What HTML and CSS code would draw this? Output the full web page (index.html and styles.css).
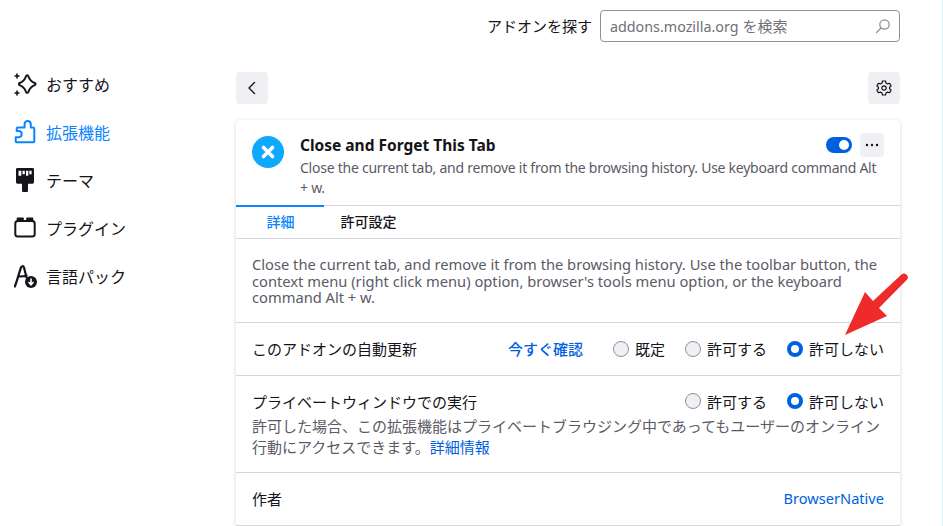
FILE: index.html

```html
<!DOCTYPE html>
<html lang="ja">
<head>
    <meta charset="UTF-8">
    <title>アドオンマネージャー</title>
    <link rel="stylesheet" href="styles.css">
</head>
<body>
    <nav class="sidebar">
        <a class="nav-item">
            <svg class="nav-icon" viewBox="0 0 24 24" fill="none" stroke="#15141a" stroke-width="2" stroke-linejoin="round"><path d="M12 4.200C11 7.500 9.500 9.500 5.600 11c-1 .4-1 1.700 0 2.100 3.900 1.500 5.400 3.500 6.400 6.800.4 1.200 2 1.200 2.400 0 1-3.300 2.500-5.300 6.400-6.800 1-.4 1-1.700 0-2.100-3.900-1.500-5.400-3.500-6.400-6.800-.4-1.200-2-1.200-2.400 0z"/><path d="M3 1.500v5M.5 4h5M3 18.500v5M.5 21h5" stroke-width="1.600"/></svg>
            <span>おすすめ</span>
        </a>
        <a class="nav-item active">
            <svg class="nav-icon" viewBox="0 0 24 24" fill="none" stroke="#0a84ff" stroke-width="2" stroke-linejoin="round"><path d="M1.700 20.500v-3.300h3c1.800 0 3-1.300 3-3.100s-1.200-3-3-3H2.700V8.800c0-.9.500-1.400 1.400-1.400h6.500V4.300c0-2 1.200-3.300 3-3.300s3.200 1.300 3.200 3.300v3.100h2c.9 0 1.500.6 1.500 1.500v11.800c0 1-.6 1.600-1.600 1.600H3.300c-1 0-1.600-.6-1.600-1.600z"/></svg>
            <span>拡張機能</span>
        </a>
        <a class="nav-item">
            <svg class="nav-icon" viewBox="0 0 24 24"><path fill="#15141a" d="M2 1.300C2 .6 2.600 0 3.300 0h15.400c.7 0 1.300.6 1.300 1.300V14c0 1-.8 1.800-1.800 1.800H14v6.200a3 3 0 0 1-6 0v-6.200H3.800C2.800 15.800 2 15 2 14z"/><path fill="#fff" d="M4.500 2.700h2.800v5H4.500zM8.500 2.700h2.300v3.500H8.500zM12 2.700h2.300v5H12zM15.300 2.700h2.300v3.500h-2.300z"/></svg>
            <span>テーマ</span>
        </a>
        <a class="nav-item">
            <svg class="nav-icon" viewBox="0 0 24 24" fill="none" stroke="#15141a" stroke-width="2"><rect x="1.300" y="5" width="19.400" height="15.500" rx="2.500"/><path d="M3.500 5V2.300h5.500V5M13 5V2.300h5.500V5" fill="#15141a" stroke-width="1.600" stroke-linejoin="round"/></svg>
            <span>プラグイン</span>
        </a>
        <a class="nav-item">
            <svg class="nav-icon" viewBox="0 0 24 24"><path fill="none" stroke="#15141a" stroke-width="2.200" stroke-linecap="round" stroke-linejoin="round" d="M.8 22.500C3.500 16 5 9 7 3.500c.6-1.600 2.500-1.800 3 0l2.500 10M4 12.500c3 0 6 0 8.500-1"/><circle cx="17" cy="18" r="6" fill="#15141a"/><path fill="none" stroke="#fff" stroke-width="1.600" d="M17 14.500v6M14.500 18l2.500 2.700 2.500-2.700"/></svg>
            <span>言語パック</span>
        </a>
    </nav>

    <main class="main">
        <header class="search-bar">
            <label class="search-label">アドオンを探す</label>
            <div class="search-box">
                <span class="search-placeholder"><span class="search-host">addons.mozilla.org</span> を検索</span>
                <svg class="search-icon" viewBox="0 0 16 16" fill="none" stroke="#8f8f9d" stroke-width="1.300"><circle cx="9.500" cy="6.500" r="4.700"/><path d="M6 10l-4.500 4.500" stroke-linecap="round"/></svg>
            </div>
        </header>

        <div class="toolbar">
            <button class="square-btn">
                <svg viewBox="0 0 16 16" width="16" height="16" fill="none" stroke="#15141a" stroke-width="1.400" stroke-linecap="round" stroke-linejoin="round"><path d="M10.500 2.500L5 8l5.500 5.500"/></svg>
            </button>
            <button class="square-btn">
                <svg viewBox="0 0 16 16" width="16" height="16" fill="none" stroke="#15141a" stroke-width="1.200" stroke-linejoin="round"><path d="M6.500 1h3l.5 2 1.600.9 2-.6 1.500 2.600-1.500 1.400v1.400l1.500 1.400-1.500 2.600-2-.6-1.600.9-.5 2h-3l-.5-2-1.600-.9-2 .6L.9 10.100l1.500-1.400V7.300L.9 5.900l1.500-2.600 2 .6L6 3z"/><circle cx="8" cy="8" r="2.200"/></svg>
            </button>
        </div>

        <section class="card">
            <div class="addon-head">
                <div class="addon-icon">
                    <svg viewBox="0 0 32 32" width="32" height="32"><path d="M11.500 11.500l9 9M20.500 11.500l-9 9" stroke="#fff" stroke-width="3.600" stroke-linecap="round"/></svg>
                </div>
                <div class="addon-text">
                    <div class="addon-title-row">
                        <h1 class="addon-title">Close and Forget This Tab</h1>
                        <span class="toggle"></span>
                        <button class="more-btn">
                            <svg viewBox="0 0 16 16" width="16" height="16" fill="#15141a"><circle cx="3" cy="8" r="1.200"/><circle cx="8" cy="8" r="1.200"/><circle cx="13" cy="8" r="1.200"/></svg>
                        </button>
                    </div>
                    <p class="addon-summary">Close the current tab, and remove it from the browsing history. Use keyboard command Alt + w.</p>
                </div>
            </div>

            <div class="tabs">
                <div class="tab selected">詳細</div>
                <div class="tab">許可設定</div>
            </div>

            <p class="description">Close the current tab, and remove it from the browsing history. Use the toolbar button, the context menu (right click menu) option, browser's tools menu option, or the keyboard command Alt + w.</p>

            <div class="row">
                <span class="row-label">このアドオンの自動更新</span>
                <a class="link check-link">今すぐ確認</a>
                <span class="radio-item"><i class="radio"></i>既定</span>
                <span class="radio-item"><i class="radio"></i>許可する</span>
                <span class="radio-item"><i class="radio checked"></i>許可しない</span>
            </div>

            <div class="row private-row">
                <div class="private-top">
                    <span class="row-label">プライベートウィンドウでの実行</span>
                    <span class="radio-item"><i class="radio"></i>許可する</span>
                    <span class="radio-item"><i class="radio checked"></i>許可しない</span>
                </div>
                <p class="private-note">許可した場合、この拡張機能はプライベートブラウジング中であってもユーザーのオンライン行動にアクセスできます。<a class="link">詳細情報</a></p>
            </div>

            <div class="row author-row">
                <span class="row-label">作者</span>
                <a class="link author-link">BrowserNative</a>
            </div>
        </section>
    </main>

    <svg class="arrow" viewBox="0 0 70 70" width="70" height="70"><path fill="#ee2a2a" d="M4 65L24 22l8 9L60.500 4.500a3.800 3.800 0 0 1 5.400 5.300L38 38l8 8z"/></svg>
</body>
</html>
```

FILE: styles.css

```css
* {
    box-sizing: border-box;
}
html, body {
    height: 526px;
    overflow: hidden;
}
body {
    margin: 0;
    display: flex;
    position: relative;
    border-right: 1px solid #dcebf4;
    background-color: #fff;
    color: #15141a;
    font-family: "Noto Sans", "Noto Sans CJK JP", sans-serif;
    font-size: 15px;
}
.sidebar {
    width: 236px;
    flex: none;
    padding: 60px 0 0 14px;
}
.nav-item {
    display: flex;
    align-items: center;
    gap: 8px;
    height: 48px;
    font-size: 16px;
}
.nav-item.active {
    color: #0a84ff;
}
.nav-icon {
    width: 24px;
    height: 24px;
    flex: none;
}
.main {
    width: 664px;
    flex: none;
}
.search-bar {
    display: flex;
    justify-content: flex-end;
    align-items: center;
    gap: 8px;
    height: 32px;
    margin-top: 10px;
}
.search-label {
    margin-bottom: 2px;
}
.search-box {
    width: 300px;
    height: 32px;
    display: flex;
    align-items: center;
    justify-content: space-between;
    padding: 0 8px 2px 9px;
    border: 1px solid #8f8f9d;
    border-radius: 4px;
}
.search-placeholder {
    color: #6f6f78;
}
.search-host {
    font-size: 14.3px;
}
.search-icon {
    width: 16px;
    height: 16px;
    margin-top: 2px;
}
.toolbar {
    display: flex;
    justify-content: space-between;
    margin-top: 30px;
}
.square-btn {
    width: 32px;
    height: 32px;
    display: flex;
    align-items: center;
    justify-content: center;
    padding: 0;
    border: none;
    border-radius: 4px;
    background-color: #f0f0f4;
}
.card {
    margin-top: 16px;
    border-radius: 4px 4px 0 0;
    box-shadow: 0 1px 4px rgba(58, 57, 68, 0.2);
    background-color: #fff;
}
.addon-head {
    display: flex;
    gap: 16px;
    height: 86px;
    padding: 13px 16px 0;
    border-bottom: 1px solid #d7d7db;
}
.addon-icon {
    width: 32px;
    height: 32px;
    flex: none;
    margin-top: 3px;
    border-radius: 50%;
    background-color: #0fa9fb;
}
.addon-text {
    flex: 1;
    min-width: 0;
}
.addon-title-row {
    display: flex;
    align-items: center;
    height: 24px;
}
.addon-title {
    flex: 1;
    margin: 0;
    font-size: 15.5px;
    font-weight: 700;
}
.toggle {
    position: relative;
    width: 26px;
    height: 16px;
    margin-right: 8px;
    border-radius: 8px;
    background-color: #0060df;
}
.toggle::after {
    content: "";
    position: absolute;
    top: 3px;
    right: 3px;
    width: 10px;
    height: 10px;
    border-radius: 50%;
    background-color: #fff;
}
.more-btn {
    width: 24px;
    height: 24px;
    display: flex;
    align-items: center;
    justify-content: center;
    padding: 0;
    border: none;
    border-radius: 4px;
    background-color: #f0f0f4;
}
.addon-summary {
    margin: 1px 0 0;
    font-size: 14px;
    letter-spacing: -0.25px;
    line-height: 20px;
    color: #5b5b66;
}
.tabs {
    display: flex;
    height: 33px;
    border-bottom: 1px solid #d7d7db;
    font-size: 14px;
}
.tab {
    width: 88px;
    margin-top: -1px;
    padding: 2px 0 0 1px;
    line-height: 30px;
    text-align: center;
    font-weight: 500;
}
.tab.selected {
    border-top: 2px solid #0a84ff;
    padding-top: 0;
    color: #0a84ff;
}
.description {
    margin: 0;
    height: 83px;
    padding: 17px 16px 0;
    font-size: 14.7px;
    line-height: 16.5px;
    color: #5b5b66;
}
.row {
    display: flex;
    align-items: center;
    height: 53px;
    padding: 0 16px 1px;
    border-top: 1px solid #d7d7db;
}
.row-label {
    margin-right: auto;
}
.link {
    color: #0060df;
}
.check-link {
    margin-right: 30px;
    font-weight: 500;
}
.radio-item {
    display: flex;
    align-items: center;
    gap: 6px;
    margin-left: 20px;
}
.check-link + .radio-item {
    margin-left: 0;
}
.radio {
    width: 16px;
    height: 16px;
    border: 1px solid #8f8f9d;
    border-radius: 50%;
    background-color: #f0f0f4;
}
.radio.checked {
    border: 4px solid #0060df;
    background-color: #fff;
}
.private-row {
    display: block;
    height: 97px;
    padding-top: 15px;
}
.private-top {
    display: flex;
    align-items: center;
    height: 20px;
}
.private-note {
    margin: 5px 0 0;
    line-height: 21px;
    color: #5b5b66;
}
.author-row {
    height: 54px;
    padding-bottom: 2px;
    border-bottom: 1px solid #d7d7db;
}
.author-link {
    font-size: 14.6px;
}
.arrow {
    position: absolute;
    left: 841px;
    top: 270px;
}
```
